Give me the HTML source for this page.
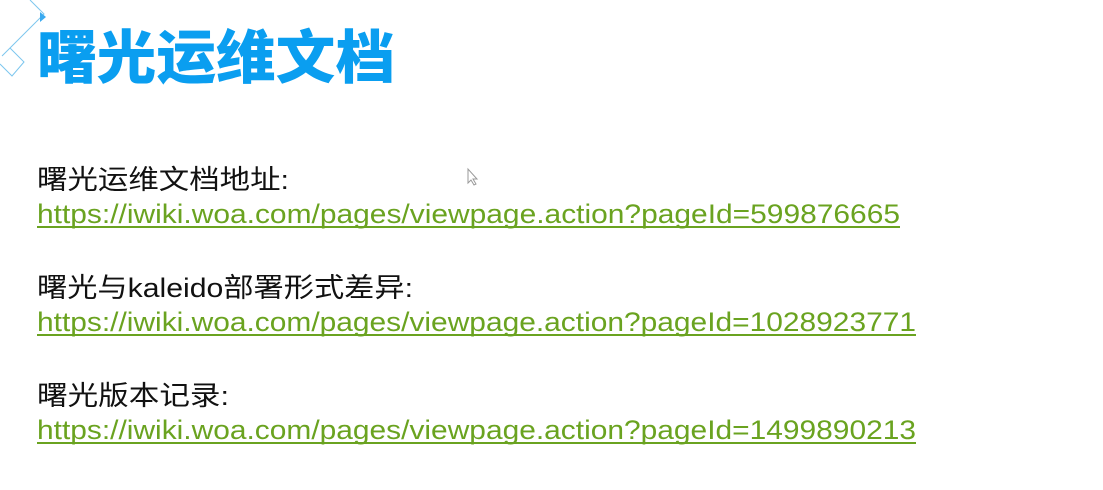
<!DOCTYPE html>
<html><head><meta charset="utf-8"><style>
html,body{margin:0;padding:0;background:#fff;width:1103px;height:490px;overflow:hidden}
svg{display:block}
</style></head><body>
<svg width="1103" height="490" xmlns="http://www.w3.org/2000/svg">
<g fill="none" stroke="#7cc6ee" stroke-width="1">
<path d="M30 0 L44 14 L36 22"/>
<path d="M36 22 L2 56"/>
<path d="M10 48 L24 62 L12 76 L0 64"/>
</g>
<path d="M40 12 L46 17 L40 22 Z" fill="#3aaaf0"/>
<text x="37" y="78" font-family="'Noto Sans CJK SC',sans-serif" font-weight="900" font-size="58" fill="#0a9ef0" textLength="358" lengthAdjust="spacingAndGlyphs">曙光运维文档</text>
<g font-family="'Liberation Sans','Noto Sans CJK SC',sans-serif" font-size="27">
<text x="37" y="189" fill="#111" textLength="252" lengthAdjust="spacingAndGlyphs">曙光运维文档地址:</text>
<text x="37" y="223" fill="#6aa320" textLength="863" lengthAdjust="spacingAndGlyphs">https://iwiki.woa.com/pages/viewpage.action?pageId=599876665</text>
<rect x="37" y="226" width="863" height="2" fill="#6aa320"/>
<text x="37" y="297" fill="#111" textLength="376" lengthAdjust="spacingAndGlyphs">曙光与kaleido部署形式差异:</text>
<text x="37" y="331" fill="#6aa320" textLength="879" lengthAdjust="spacingAndGlyphs">https://iwiki.woa.com/pages/viewpage.action?pageId=1028923771</text>
<rect x="37" y="334" width="879" height="2" fill="#6aa320"/>
<text x="37" y="405" fill="#111" textLength="192" lengthAdjust="spacingAndGlyphs">曙光版本记录:</text>
<text x="37" y="439" fill="#6aa320" textLength="879" lengthAdjust="spacingAndGlyphs">https://iwiki.woa.com/pages/viewpage.action?pageId=1499890213</text>
<rect x="37" y="442" width="879" height="2" fill="#6aa320"/>
</g>
<path d="M468 169 L468 183 L471 180 L474 185 L476 184 L473 179 L477 179 Z" fill="#fff" stroke="#999" stroke-width="1"/>
</svg>
</body></html>
